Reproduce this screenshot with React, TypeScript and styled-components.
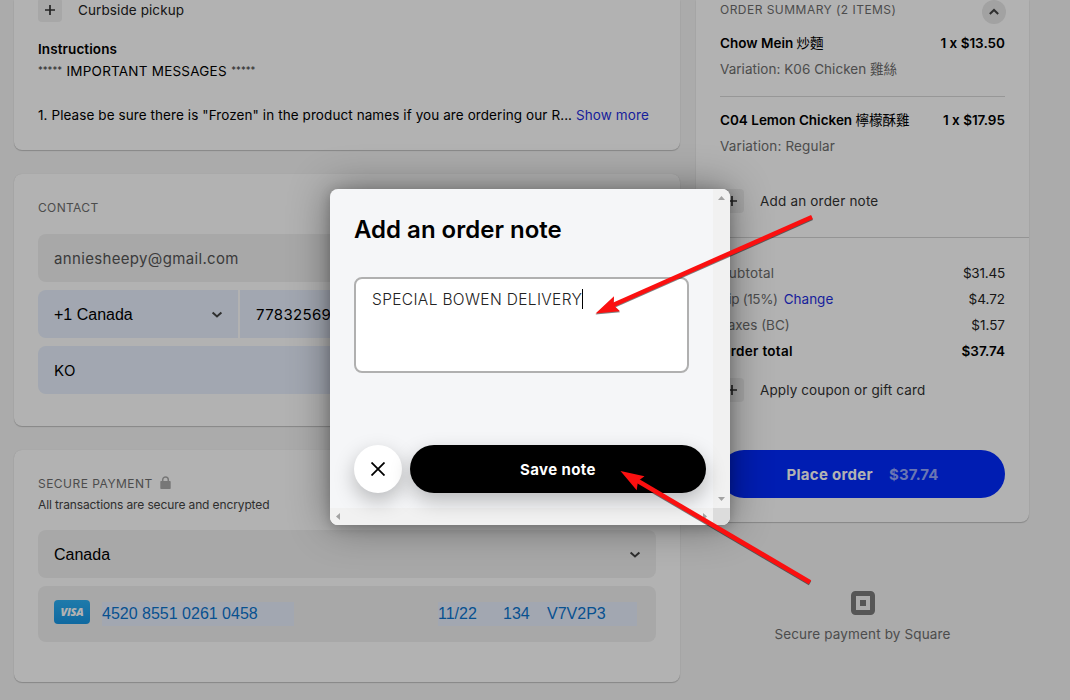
import React from "react";
import styled, { createGlobalStyle } from "styled-components";

const GlobalStyle = createGlobalStyle`
  * { box-sizing: border-box; }
  body { margin: 0; background: #f5f5f5; }
`;

const market = `Inter, "Noto Sans CJK TC", sans-serif`;
const arial = `"Liberation Sans", Arial, sans-serif`;

const Page = styled.div`
  position: relative;
  width: 1070px;
  height: 700px;
  overflow: hidden;
  background: #f5f5f5;
  display: flex;
  align-items: flex-start;
  gap: 16px;
  padding-left: 14px;
  font-family: ${market};
  font-size: 13.5px;
  color: #000;
`;

const Text = styled.span<{
  $size?: number;
  $weight?: number;
  $color?: string;
  $spacing?: number;
  $lift?: boolean;
}>`
  font-size: ${(p) => p.$size ?? 13.5}px;
  font-weight: ${(p) => p.$weight ?? 400};
  color: ${(p) => p.$color ?? "inherit"};
  letter-spacing: ${(p) => p.$spacing ?? 0.1}px;
  padding-bottom: ${(p) => (p.$lift ? 2 : 0)}px;
  white-space: pre;
`;

const SelectText = styled.span`
  font: 16px ${arial};
  padding-top: 2px;
`;

const CardText = styled.span`
  font-family: ${arial};
  font-size: 16px;
  color: #0b74cf;
`;

const Stars = styled.span`
  width: 28.5px;
  font-size: 9.6px;
  padding-bottom: 4px;
  color: #444;

  &:last-child { text-align: right; }
`;

const Han = styled.span`
  font-weight: 400;
  letter-spacing: 0;
`;

const Main = styled.main`
  width: 666px;
  display: flex;
  flex-direction: column;
  gap: 24px;
`;

const Card = styled.section<{ $height: number; $cut?: boolean }>`
  height: ${(p) => p.$height}px;
  padding: ${(p) => (p.$cut ? "0 24px" : "24px 24px 0")};
  background: #fff;
  border-radius: ${(p) => (p.$cut ? "0 0 8px 8px" : "8px")};
  box-shadow: 0 1px 1px rgba(0, 0, 0, 0.2), 0 0 1px rgba(0, 0, 0, 0.12);
`;

const Line = styled.div<{ $height?: number }>`
  height: ${(p) => p.$height ?? 22}px;
  display: flex;
  align-items: center;
`;

const Split = styled(Line)`
  justify-content: space-between;
`;

const Label = styled.span`
  display: flex;
  gap: 6px;
`;

const ActionRow = styled.div<{ $top: number }>`
  height: 24px;
  margin-top: ${(p) => p.$top}px;
  display: flex;
  align-items: center;
  gap: 16px;
`;

const PlusBox = styled.span`
  width: 24px;
  height: 24px;
  border-radius: 4px;
  background: #f0f0f0;
  display: grid;
  place-items: center;
`;

const Instructions = styled.div`
  margin-top: 16px;
`;

const Heading = styled.div`
  height: 36px;
  line-height: 19px;
`;

const Fields = styled.div`
  display: flex;
  flex-direction: column;
  gap: 8px;
`;

const Field = styled.div<{ $blue?: boolean; $height?: number }>`
  height: ${(p) => p.$height ?? 48}px;
  flex-shrink: 0;
  border-radius: 8px;
  padding: 0 15px 0 16px;
  background: ${(p) => (p.$blue ? "#e8f0fe" : "#f1f1f1")};
  display: flex;
  align-items: center;
  justify-content: space-between;
`;

const PhoneRow = styled.div`
  display: grid;
  grid-template-columns: 200px 1fr;
  gap: 2px;

  & > :first-child { border-radius: 8px 0 0 8px; }
  & > :last-child { border-radius: 0 8px 8px 0; }
`;

const PaymentHeading = styled.div`
  height: 56px;
  padding-top: 1px;
`;

const LockIcon = styled.svg`
  margin: -3px 0 0 7px;
`;

const CardField = styled(Field)`
  align-items: flex-start;
  justify-content: flex-start;
  padding: 14px 18px 0 16px;
`;

const VisaBadge = styled.span`
  width: 36px;
  height: 24px;
  border-radius: 4px;
  background: linear-gradient(#2cb0f5, #1797e6);
  display: grid;
  place-items: center;
  font: italic 800 11px/24px "Open Sans", sans-serif;
  letter-spacing: -0.3px;
  color: #fff;
`;

const Autofill = styled.span<{ $width: number; $left: number }>`
  width: ${(p) => p.$width}px;
  height: 24px;
  margin: 2px 0 0 ${(p) => p.$left}px;
  background: #e8f0fe;
  line-height: 23px;
  display: flex;
`;

const CardPart = styled.span<{ $width: number }>`
  width: ${(p) => p.$width}px;
`;

const Aside = styled.aside`
  width: 333px;
`;

const Summary = styled(Card)`
  padding: 0;
`;

const SummaryItems = styled.div`
  height: 238px;
  padding: 0 24px;
  border-bottom: 1px solid #d4d4d4;
`;

const SummaryHead = styled.div`
  height: 30px;
  padding-top: 1px;
  display: flex;
  justify-content: space-between;
  line-height: 17px;
`;

const CollapseButton = styled.span`
  width: 24px;
  height: 24px;
  margin: -1px -1px 0 0;
  border-radius: 50%;
  background: #e8e8e8;
  display: grid;
  place-items: center;
`;

const Divider = styled.hr`
  height: 1px;
  border: 0;
  margin: 14px 0 10px;
  background: #d9d9d9;
`;

const Totals = styled.div`
  padding: 22px 24px 0;
`;

const PlaceOrder = styled.div`
  height: 48px;
  margin-top: 48px;
  border-radius: 24px;
  background: #002aff;
  color: #fff;
  display: flex;
  align-items: center;
  justify-content: center;
  gap: 16px;
`;

const Powered = styled.footer`
  margin-top: 69px;
  display: flex;
  flex-direction: column;
  align-items: center;
  gap: 8px;
  line-height: 22px;
`;

const Scrim = styled.div`
  position: absolute;
  inset: 0;
  background: rgba(0, 0, 0, 0.3);
`;

const Dialog = styled.div`
  position: absolute;
  left: 330px;
  top: 189px;
  width: 400px;
  height: 336px;
  border-radius: 8px;
  overflow: hidden;
  background: #f5f6f8;
  display: grid;
  grid-template: 319px 17px / 383px 17px;
`;

const DialogShadow = styled.div`
  position: absolute;
  left: 330px;
  top: 189px;
  width: 400px;
  height: 336px;
  border-radius: 8px;
  box-shadow: 0 0 40px rgba(0, 0, 0, 0.42), 0 2px 12px rgba(0, 0, 0, 0.2);
`;

const DialogBody = styled.div`
  padding: 24px 0 0 24px;
  position: relative;
  z-index: 1;
`;

const DialogTitle = styled.h2`
  margin: 0 0 31px;
  font: inherit;
  height: 33px;
  line-height: 33px;
`;

const NoteInput = styled.div`
  width: 335px;
  height: 96px;
  border: 2px solid #b0b0b0;
  border-radius: 8px;
  background: #fff;
  padding: 10px 16px;
  display: flex;
  color: #222;
  line-height: 22px;
`;

const Caret = styled.span`
  width: 1px;
  height: 20px;
  background: #000;
`;

const DialogActions = styled.div`
  width: 352px;
  margin-top: 72px;
  display: grid;
  grid-template-columns: 48px 296px;
  gap: 8px;
`;

const RoundButton = styled.div<{ $dark?: boolean }>`
  height: 48px;
  border-radius: 24px;
  background: ${(p) => (p.$dark ? "#000" : "#fff")};
  color: ${(p) => (p.$dark ? "#fff" : "#000")};
  box-shadow: 0 8px 20px rgba(0, 0, 0, 0.25);
  display: grid;
  place-items: center;
`;

const Bar = styled.div<{ $vertical?: boolean }>`
  background: #f1f1f1;
  display: flex;
  flex-direction: ${(p) => (p.$vertical ? "column" : "row")};
  align-items: center;
  justify-content: space-between;
  padding: ${(p) => (p.$vertical ? "7px 0" : "0 6px")};
`;

const Corner = styled.div`
  background: #dcdcdc;
`;

const Arrows = styled.svg`
  position: absolute;
  inset: 0;
  z-index: 2;
  filter: drop-shadow(0 1px 0.5px rgba(0, 0, 0, 0.5));
`;

const Plus = () => (
  <PlusBox>
    <svg width="10" height="10" viewBox="0 0 10 10">
      <path d="M5 0V10M0 5H10" stroke="#333" strokeWidth="1.7" />
    </svg>
  </PlusBox>
);

const Chevron = ({ up = false }: { up?: boolean }) => (
  <svg width="12" height="8" viewBox="0 0 12 8">
    <path
      d={up ? "M1.8 6L6 2L10.2 6" : "M1.6 2.4L6 6.4L10.4 2.4"}
      fill="none"
      stroke="#444"
      strokeWidth="2"
    />
  </svg>
);

const scrollArrows = {
  up: "M0 4L3.5 0L7 4Z",
  down: "M0 0H7L3.5 4Z",
  left: "M4 0V7L0 3.5Z",
  right: "M0 0V7L4 3.5Z",
};

const ScrollArrow = ({ dir }: { dir: keyof typeof scrollArrows }) => {
  const vertical = dir === "up" || dir === "down";
  return (
    <svg width={vertical ? 7 : 4} height={vertical ? 4 : 7}>
      <path d={scrollArrows[dir]} fill="#a3a3a3" />
    </svg>
  );
};

const grey = "#6e6e6e";

export default function App() {
  return (
    <Page>
      <GlobalStyle />
      <Main>
        <Card $height={150} $cut>
          <ActionRow $top={-2}>
            <Plus />
            <Text $color="#222">Curbside pickup</Text>
          </ActionRow>
          <Instructions>
            <Line><Text $weight={600}>Instructions</Text></Line>
            <Line>
              <Stars>*****</Stars>
              <Text $spacing={0.22}>IMPORTANT MESSAGES</Text>
              <Stars>*****</Stars>
            </Line>
            <Line />
            <Line>
              <Text $spacing={0.085}>1. Please be sure there is "Frozen" in the product names if you are ordering our R... </Text>
              <Text $color="#1f2fe0">Show more</Text>
            </Line>
          </Instructions>
        </Card>

        <Card $height={252}>
          <Heading><Text $size={12} $color={grey} $spacing={0.35}>CONTACT</Text></Heading>
          <Fields>
            <Field><Text $size={15} $color="#555" $spacing={0.34}>anniesheepy@gmail.com</Text></Field>
            <PhoneRow>
              <Field $blue>
                <SelectText>+1 Canada</SelectText>
                <Chevron />
              </Field>
              <Field $blue><Text $size={15} $spacing={0.35}>7783256999</Text></Field>
            </PhoneRow>
            <Field $blue><Text $size={15} $spacing={0.5}>KO</Text></Field>
          </Fields>
        </Card>

        <Card $height={232}>
          <PaymentHeading>
            <Line $height={18}>
              <Text $size={12} $color={grey} $spacing={0.48} $lift>SECURE PAYMENT</Text>
              <LockIcon width="11" height="13" viewBox="0 0 11 13">
                <rect x="0.3" y="5" width="10.4" height="8" rx="0.8" fill="#ababab" />
                <path d="M2.7 6V3.7a2.8 2.8 0 0 1 5.6 0V6" fill="none" stroke="#ababab" strokeWidth="1.5" />
              </LockIcon>
            </Line>
            <Line $height={24}>
              <Text $size={12} $color="#444" $spacing={-0.12} $lift>All transactions are secure and encrypted</Text>
            </Line>
          </PaymentHeading>
          <Fields>
            <Field>
              <SelectText>Canada</SelectText>
              <Chevron />
            </Field>
            <CardField $height={56}>
              <VisaBadge>VISA</VisaBadge>
              <Autofill $width={192} $left={12}>
                <CardText>4520 8551 0261 0458</CardText>
              </Autofill>
              <Autofill $width={199} $left={144}>
                <CardPart $width={65}><CardText>11/22</CardText></CardPart>
                <CardPart $width={44}><CardText>134</CardText></CardPart>
                <CardText>V7V2P3</CardText>
              </Autofill>
            </CardField>
          </Fields>
        </Card>
      </Main>

      <Aside>
        <Summary $height={522} $cut>
          <SummaryItems>
            <SummaryHead>
              <Text $size={12} $color={grey} $spacing={0.47}>ORDER SUMMARY (2 ITEMS)</Text>
              <CollapseButton><Chevron up /></CollapseButton>
            </SummaryHead>
            <Split $height={26}>
              <Text $weight={600} $spacing={0} $lift>Chow Mein <Han>炒麵</Han></Text>
              <Text $weight={600} $spacing={0}>1 x $13.50</Text>
            </Split>
            <Line $height={26}>
              <Text $color={grey} $spacing={0.04} $lift>Variation: K06 Chicken <Han>雞絲</Han></Text>
            </Line>
            <Divider />
            <Split $height={26}>
              <Text $weight={600} $spacing={0} $lift>C04 Lemon Chicken <Han>檸檬酥雞</Han></Text>
              <Text $weight={600} $spacing={0}>1 x $17.95</Text>
            </Split>
            <Line $height={26}><Text $color={grey} $spacing={0.15}>Variation: Regular</Text></Line>
            <ActionRow $top={30}>
              <Plus />
              <Text $color="#333" $spacing={0.19}>Add an order note</Text>
            </ActionRow>
          </SummaryItems>
          <Totals>
            <Split $height={26}>
              <Text $color={grey} $spacing={0.2}>Subtotal</Text>
              <Text $color="#222" $spacing={-0.2}>$31.45</Text>
            </Split>
            <Split $height={26}>
              <Label>
                <Text $color={grey} $spacing={-0.35}>Tip (15%)</Text>
                <Text $color="#1f2fe0" $spacing={0}>Change</Text>
              </Label>
              <Text $color="#222" $spacing={0}>$4.72</Text>
            </Split>
            <Split $height={26}>
              <Text $color={grey} $spacing={0}>Taxes (BC)</Text>
              <Text $color="#222" $spacing={0}>$1.57</Text>
            </Split>
            <Split $height={26}>
              <Text $weight={600} $spacing={0.3}>Order total</Text>
              <Text $weight={600} $spacing={0}>$37.74</Text>
            </Split>
            <ActionRow $top={14}>
              <Plus />
              <Text $color="#333" $spacing={0.12}>Apply coupon or gift card</Text>
            </ActionRow>
            <PlaceOrder>
              <Text $size={15} $weight={700} $spacing={0.3}>Place order</Text>
              <Text $size={15} $weight={700} $color="#99a9ff">$37.74</Text>
            </PlaceOrder>
          </Totals>
        </Summary>
        <Powered>
          <svg width="24" height="24" viewBox="0 0 24 24">
            <rect x="2.5" y="2.5" width="19" height="19" rx="2" fill="none" stroke="#7b7b7b" strokeWidth="5" />
            <rect x="9" y="9" width="6" height="6" fill="#7b7b7b" />
          </svg>
          <Text $color={grey} $spacing={0.15}>Secure payment by Square</Text>
        </Powered>
      </Aside>

      <Scrim />
      <DialogShadow />
      <Dialog role="dialog">
        <DialogBody>
          <DialogTitle><Text $size={24} $weight={600} $spacing={0}>Add an order note</Text></DialogTitle>
          <NoteInput>
            <Text $size={15.5} $weight={350} $spacing={0.35}>SPECIAL BOWEN DELIVERY</Text>
            <Caret />
          </NoteInput>
          <DialogActions>
            <RoundButton>
              <svg width="14" height="14" viewBox="0 0 14 14">
                <path d="M0.5 0.5L13.5 13.5M13.5 0.5L0.5 13.5" stroke="#000" strokeWidth="1.8" />
              </svg>
            </RoundButton>
            <RoundButton $dark><Text $size={15} $weight={700} $spacing={0.4}>Save note</Text></RoundButton>
          </DialogActions>
        </DialogBody>
        <Bar $vertical><ScrollArrow dir="up" /><ScrollArrow dir="down" /></Bar>
        <Bar><ScrollArrow dir="left" /><ScrollArrow dir="right" /></Bar>
        <Corner />
      </Dialog>

      <Arrows width="1070" height="700">
        <g fill="#fb1010" stroke="#fb1010">
          <path d="M812 217L612 305.5" strokeWidth="4.6" />
          <path d="M595.5 313.5L614 296.3L613.5 305L620 311.3Z" stroke="none" />
          <path d="M810 582.3L637 480.5" strokeWidth="4.6" />
          <path d="M620.5 471L644.5 476.3L638 481L636.7 490.3Z" stroke="none" />
        </g>
      </Arrows>
    </Page>
  );
}
